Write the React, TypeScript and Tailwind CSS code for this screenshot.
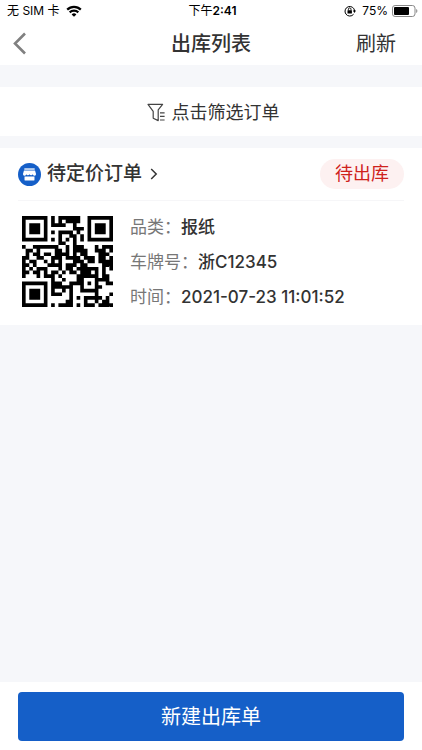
import type { ReactNode } from "react";

const QR_ROWS = [
  "1111111010111111001111111",
  "1000001010101111001000001",
  "1011101011110010001011101",
  "1011101000000011101011101",
  "1011101010111101001011101",
  "1000001000100110101000001",
  "1111111010101010101111111",
  "0000000000110010000000000",
  "1001111111001011100010111",
  "0110100001101011110011101",
  "0101101101111010110001110",
  "1100110011101111011101101",
  "1011001010100011101101111",
  "1101000111101110110000111",
  "1010111000101101111110101",
  "1101101011010110111010100",
  "1000101110100001111110110",
  "0000000010010001100011110",
  "1111111011100111101010011",
  "1000001011111100100011000",
  "1011101010010100111110000",
  "1011101011100100000010001",
  "1011101000000101011111010",
  "1000001000001100010010110",
  "1111111010111101011101111",
];

const QR_PATH = QR_ROWS.flatMap((row, y) =>
  row.split("").map((cell, x) => (cell === "1" ? `M${x} ${y}h1v1h-1z` : ""))
).join("");

function QrCode() {
  return (
    <svg viewBox="0 0 25 25" className="h-[91px] w-[91px] shrink-0" role="img" aria-label="订单二维码">
      <path d={QR_PATH} />
    </svg>
  );
}

function StatusBar() {
  return (
    <div className="grid h-[22px] grid-cols-3 items-center pl-[7px] pr-1 text-xs text-black">
      <div className="flex items-center gap-1.5">
        <span>无 SIM 卡</span>
        <svg viewBox="0 0 16 12" className="h-3 w-4" fill="none" stroke="currentColor" strokeWidth="2.2">
          <path d="M1.2 4.6a9.6 9.6 0 0 1 13.6 0" />
          <path d="M3.7 7.4a6.1 6.1 0 0 1 8.6 0" />
          <path d="M8 11.8 5.6 9.4a3.4 3.4 0 0 1 4.8 0Z" fill="currentColor" stroke="none" />
        </svg>
      </div>
      <div className="text-center">
        下午<span className="font-semibold">2:41</span>
      </div>
      <div className="flex items-center justify-end">
        <svg viewBox="0 0 12 12" className="mr-1.5 h-3 w-3" fill="none" stroke="currentColor">
          <path d="M9.6 9.2A4.8 4.8 0 1 1 10.6 6" />
          <path d="M8.8 5.6H12L10.5 8Z" fill="currentColor" stroke="none" />
          <rect x="3.5" y="5.2" width="4.4" height="3.4" rx=".4" fill="currentColor" stroke="none" />
          <path d="M4.4 5.4V4.2a1.3 1.3 0 0 1 2.6 0v1.2" strokeWidth=".9" />
        </svg>
        <span className="mr-1">75%</span>
        <svg viewBox="0 0 26 12" className="h-3 w-[26px]">
          <rect x=".5" y=".5" width="22.5" height="11" rx="2.6" fill="none" stroke="#888" />
          <rect x="2" y="2" width="15" height="8" rx="1" />
          <path d="M24.2 4v4c1.6-.6 1.6-3.4 0-4Z" fill="#888" />
        </svg>
      </div>
    </div>
  );
}

function Field({ label, children }: { label: string; children: ReactNode }) {
  return (
    <div className="flex h-[35px] items-center">
      <dt className="text-[#777]">{label}：</dt>
      <dd className="font-medium text-[#333]">{children}</dd>
    </div>
  );
}

export default function App() {
  return (
    <div className="flex min-h-screen flex-col bg-[#f6f7fa] font-[Inter,'Noto_Sans_CJK_SC',sans-serif] text-[#333]">
      <header className="bg-white">
        <StatusBar />
        <nav className="grid h-[43px] grid-cols-3 items-center pl-3 pr-[26px] text-xl">
          <button type="button" aria-label="返回" className="w-4">
            <svg viewBox="0 0 16 24" className="h-6 w-4" fill="none" stroke="#808080" strokeWidth="2.6">
              <path d="M13 1.5 3 11.5l10 10" />
            </svg>
          </button>
          <h1 className="pl-3.5 text-center font-medium whitespace-nowrap">出库列表</h1>
          <button type="button" className="justify-self-end">
            刷新
          </button>
        </nav>
      </header>

      <main className="flex-1">
        <button
          type="button"
          className="mt-[22px] flex h-[49px] w-full items-center justify-center gap-1.5 bg-white pt-0.5 pl-1 text-lg"
        >
          <svg viewBox="0 0 19 19" className="h-[19px] w-[19px]" fill="none" stroke="#444" strokeWidth="1.2">
            <path d="M6.2 15.4V8.4L1 1.4h14.6l-4.4 5.4v10.8l-5-2.4" strokeLinejoin="round" />
            <path d="M13 9.8h4.6M13 13.4h4.6M13 17h4.6" />
          </svg>
          点击筛选订单
        </button>

        <section className="mt-3 bg-white px-[18px]">
          <div className="flex h-[53px] items-center border-b border-[#f6f6f8]">
            <a href="#order" className="flex items-center text-[19px] font-medium">
              <svg viewBox="0 0 24 24" className="mr-1.5 h-[23px] w-[23px]">
                <circle cx="12" cy="12" r="12" fill="#155fc8" />
                <path d="M6.6 5.6h10.8V7H6.6z" fill="#fff" />
                <path d="M6.2 7.8h11.6l1 3.6a1.7 1.7 0 0 1-3.4.3 1.8 1.8 0 0 1-3.4 0 1.8 1.8 0 0 1-3.4 0 1.7 1.7 0 0 1-3.4-.3Z" fill="#fff" />
                <path d="M6.8 14h10.4v3.4a.9.9 0 0 1-.9.9H7.7a.9.9 0 0 1-.9-.9Z" fill="#fff" />
              </svg>
              待定价订单
              <svg viewBox="0 0 8 12" className="ml-2 h-3 w-2" fill="none" stroke="#333" strokeWidth="1.5">
                <path d="m1.2 1 5 5-5 5" />
              </svg>
            </a>
            <span className="ml-auto flex h-[30px] items-center rounded-full bg-[#fdf1f1] px-[15px] text-lg text-[#cf221c]">
              待出库
            </span>
          </div>
          <div className="flex gap-[17px] pt-[15px] pb-[18px] pl-1">
            <QrCode />
            <dl className="-mt-1.5 -mb-2 text-[17px]">
              <Field label="品类">报纸</Field>
              <Field label="车牌号">浙C12345</Field>
              <Field label="时间">2021-07-23 11:01:52</Field>
            </dl>
          </div>
        </section>
      </main>

      <footer className="bg-white px-[18px] pt-[10px] pb-[9px]">
        <button type="button" className="h-[49px] w-full rounded bg-[#155fc8] text-xl text-white">
          新建出库单
        </button>
      </footer>
    </div>
  );
}
